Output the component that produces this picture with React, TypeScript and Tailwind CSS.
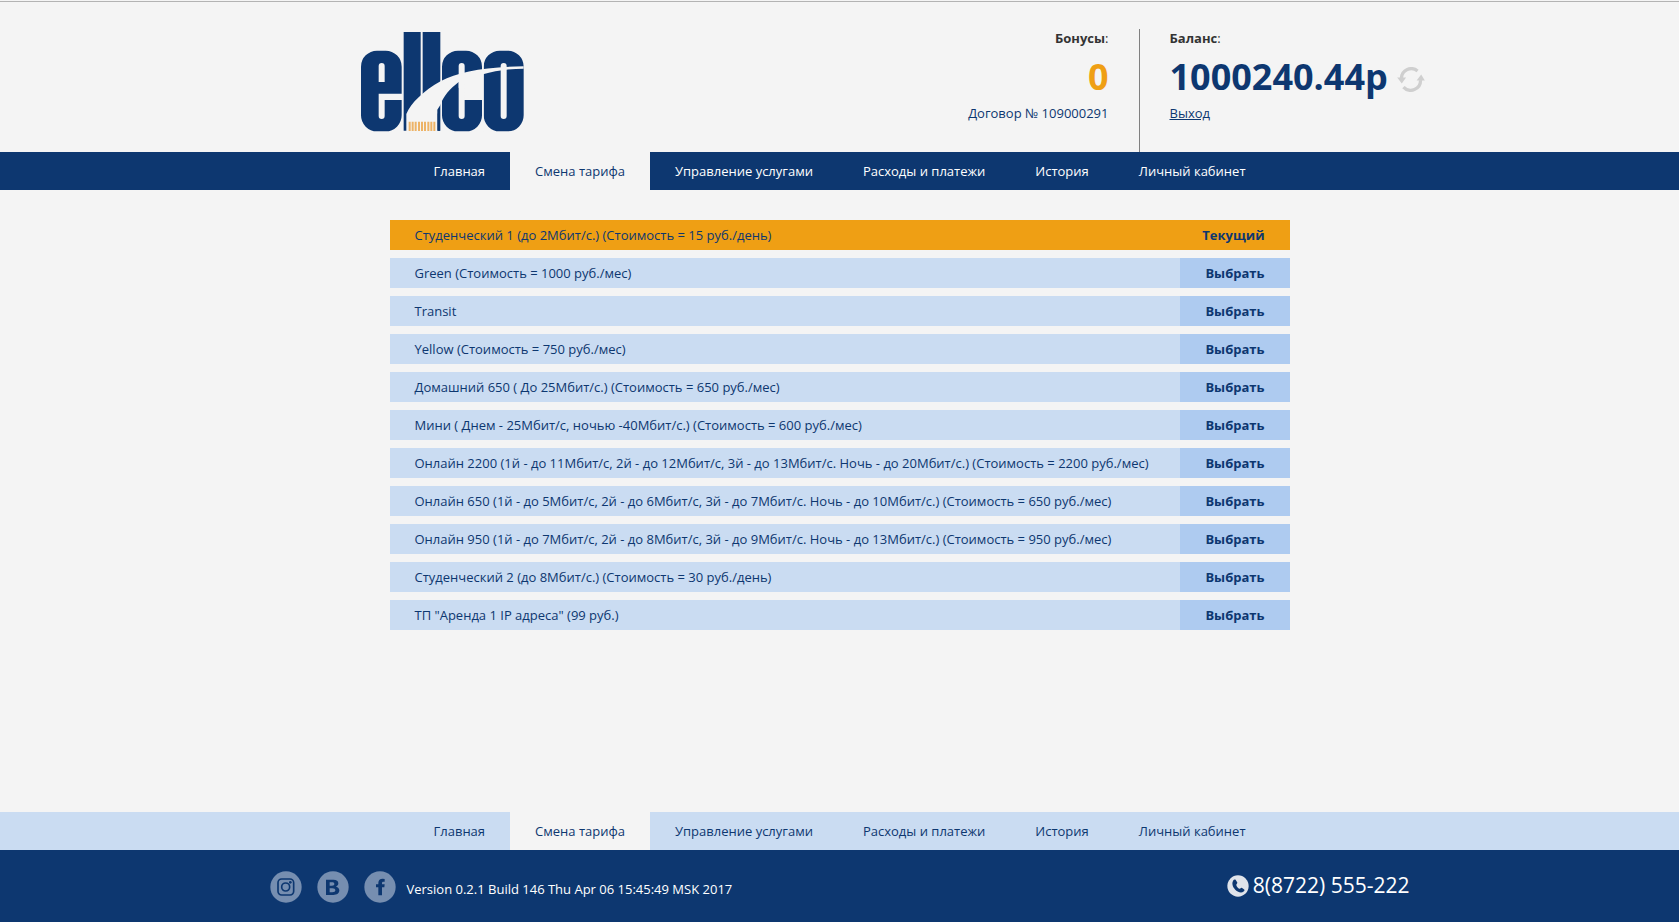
import React from 'react';

const menu: string[] = [
  'Главная',
  'Смена тарифа',
  'Управление услугами',
  'Расходы и платежи',
  'История',
  'Личный кабинет',
];

const activeItem = 'Смена тарифа';

const tariffs: string[] = [
  'Green (Стоимость = 1000 руб./мес)',
  'Transit',
  'Yellow (Стоимость = 750 руб./мес)',
  'Домашний 650 ( До 25Мбит/с.) (Стоимость = 650 руб./мес)',
  'Мини ( Днем - 25Мбит/с, ночью -40Мбит/с.) (Стоимость = 600 руб./мес)',
  'Онлайн 2200 (1й - до 11Мбит/с, 2й - до 12Мбит/с, 3й - до 13Мбит/с. Ночь - до 20Мбит/с.) (Стоимость = 2200 руб./мес)',
  'Онлайн 650 (1й - до 5Мбит/с, 2й - до 6Мбит/с, 3й - до 7Мбит/с. Ночь - до 10Мбит/с.) (Стоимость = 650 руб./мес)',
  'Онлайн 950 (1й - до 7Мбит/с, 2й - до 8Мбит/с, 3й - до 9Мбит/с. Ночь - до 13Мбит/с.) (Стоимость = 950 руб./мес)',
  'Студенческий 2 (до 8Мбит/с.) (Стоимость = 30 руб./день)',
  'ТП "Аренда 1 IP адреса" (99 руб.)',
];

function Logo() {
  return (
    <svg viewBox="34 36 489 300" className="h-[100px] w-[163px]" role="img" aria-label="ellco">
      <g fill="#0d3770">
        <path
          fillRule="evenodd"
          d="M34 140a48 48 0 0 1 48-48h26a48 48 0 0 1 48 48v81H87v67a9 9 0 0 0 18 0v-48h51v46a48 48 0 0 1-48 48H82a48 48 0 0 1-48-48zM87 186h18v-48a9 9 0 0 0-18 0z"
        />
        <path d="M162 36h51v296h-51zM219 36h53v296h-53z" />
        <path d="M277 140a48 48 0 0 1 48-48h24a48 48 0 0 1 48 48v46h-52v-48a9 9 0 0 0-18 0v150a9 9 0 0 0 18 0v-48h52v46a48 48 0 0 1-48 48h-24a48 48 0 0 1-48-48z" />
        <path
          fillRule="evenodd"
          d="M402 140a48 48 0 0 1 48-48h24a48 48 0 0 1 48 48v146a48 48 0 0 1-48 48h-24a48 48 0 0 1-48-48zM453 288a9 9 0 0 0 18 0v-150a9 9 0 0 0-18 0z"
        />
      </g>
      <path
        fill="#f4f4f4"
        d="M170 338v-56c14-33 50-69 104-99c50-27 130-43 248-44v7c-50 0-90 8-122 17v74h-55v-51l-18 18v-18c-27 21-46 43-55 69l-9 14v69z"
      />
      <path fill="#0d3770" d="M264 282c2-6 4-9 7-13v63h-7z" />
      <path fill="#f4f4f4" d="M397 92h5v242h-5z" />
      <path
        fill="#edb366"
        d="M177 305h6v28h-6zM186 305h6v28h-6zM195 305h6v28h-6zM205 305h6v28h-6zM214 305h6v28h-6zM223 305h6v28h-6zM233 305h6v28h-6zM242 305h6v28h-6zM251 305h6v28h-6z"
      />
    </svg>
  );
}

function RefreshIcon() {
  return (
    <svg viewBox="0 0 84 76" className="h-[25px] w-[28px]" aria-hidden="true">
      <g fill="none" stroke="#cfcfcf" strokeWidth="10">
        <path d="M13 34A30 30 0 0 1 62 12" />
        <path d="M71 40A30 30 0 0 1 19 61" />
      </g>
      <path fill="#cfcfcf" d="M0 32h27L14 50zM59 41h25L73 23z" />
    </svg>
  );
}

function InstagramIcon() {
  return (
    <svg viewBox="0 0 96 96" className="size-8" aria-hidden="true">
      <circle cx="48" cy="48" r="47" fill="#768eb0" />
      <g fill="none" stroke="#0d3770" strokeWidth="5">
        <rect x="24" y="24" width="47" height="48" rx="11" />
        <circle cx="47" cy="48" r="12" />
      </g>
      <circle cx="61" cy="34" r="4" fill="#0d3770" />
    </svg>
  );
}

function VkIcon() {
  return (
    <svg viewBox="0 0 96 96" className="size-8" aria-hidden="true">
      <circle cx="48" cy="48" r="47" fill="#768eb0" />
      <path
        fill="#0d3770"
        fillRule="evenodd"
        d="M27 26h22c10 0 15 4 15 11 0 5-3 8-7 10 6 1 10 6 10 11 0 9-7 14-18 14H27zM38 34v10h7c5 0 7-2 7-5s-2-5-7-5zM38 52v12h8c6 0 9-2 9-6s-3-6-9-6z"
      />
    </svg>
  );
}

function FacebookIcon() {
  return (
    <svg viewBox="0 0 96 96" className="size-8" aria-hidden="true">
      <circle cx="48" cy="48" r="47" fill="#768eb0" />
      <path
        fill="#0d3770"
        d="M43 73V49h-7v-9h7v-4c0-9 5-13 13-13l6 1v8h-4c-3 0-4 2-4 4v4h8l-1 9h-7v24z"
      />
    </svg>
  );
}

function PhoneIcon() {
  return (
    <svg viewBox="0 0 64 64" className="size-[22px]" aria-hidden="true">
      <circle cx="32" cy="32" r="31" fill="#dfe3ea" />
      <path
        fill="#0d3770"
        d="M18 16c2-3 5-4 7-2l5 8c1 2-3 5-3 7 1 5 5 9 9 11 3 0 5-4 7-3l7 5c2 2 0 5-2 6-4 4-10 4-17 0-10-6-17-17-15-27z"
      />
    </svg>
  );
}

function Menu({ tone, label }: { tone: 'dark' | 'light'; label: string }) {
  const dark = tone === 'dark';
  return (
    <nav aria-label={label} className={dark ? 'bg-[#0d3770]' : 'bg-[#cadcf2]'}>
      <ul className="flex justify-center">
        {menu.map((item) => {
          const active = item === activeItem;
          return (
            <li key={item}>
              <a
                href="#"
                aria-current={active ? 'page' : undefined}
                className={
                  'block px-[25px] py-[10px] leading-[18px] ' +
                  (active
                    ? 'bg-[#f4f4f4] text-[#0d3770]'
                    : dark
                      ? 'font-medium text-white'
                      : 'text-[#0d3770]')
                }
              >
                {item}
              </a>
            </li>
          );
        })}
      </ul>
    </nav>
  );
}

export default function App() {
  return (
    <div className="flex min-h-screen flex-col bg-[#f4f4f4] pt-px font-['Open_Sans',sans-serif] text-[13px] leading-[18px] text-[#0d3770]">
      <header className="border-t border-[#b3b3b3]">
        <div className="mx-auto flex h-[150px] max-w-[1200px] pt-[27px]">
          <div className="flex w-3/4 justify-between border-r border-[#808080] pr-[30px] pl-[121px]">
            <a href="#" className="mt-[3px]">
              <Logo />
            </a>
            <div className="text-right">
              <p className="text-[#333333]">
                <b>Бонусы</b>:
              </p>
              <p className="mt-[5px] mb-[3px] text-4xl leading-[49px] font-bold text-[#ef9f14]">0</p>
              <p>Договор № 109000291</p>
            </div>
          </div>
          <div className="pl-[30px]">
            <p className="text-[#333333]">
              <b>Баланс</b>:
            </p>
            <div className="mt-[5px] mb-[3px] flex items-center gap-[9px]">
              <p className="text-4xl leading-[49px] font-bold">1000240.44р</p>
              <button type="button" aria-label="Обновить баланс" className="pt-[6px]">
                <RefreshIcon />
              </button>
            </div>
            <a href="#" className="underline">
              Выход
            </a>
          </div>
        </div>
        <Menu tone="dark" label="Основное меню" />
      </header>

      <main className="mx-auto w-full max-w-[900px] grow py-[30px]">
        <ul className="flex flex-col gap-2">
          <li className="flex items-center justify-between bg-[#ef9f14] px-[25px] py-[6px]">
            <span>Студенческий 1 (до 2Мбит/с.) (Стоимость = 15 руб./день)</span>
            <b>Текущий</b>
          </li>
          {tariffs.map((tariff) => (
            <li key={tariff} className="flex justify-between bg-[#cadcf2]">
              <span className="py-[6px] pl-[25px]">{tariff}</span>
              <button type="button" className="bg-[#aecbf0] px-[25px] py-[6px] font-bold">
                Выбрать
              </button>
            </li>
          ))}
        </ul>
      </main>

      <footer>
        <Menu tone="light" label="Нижнее меню" />
        <div className="bg-[#0d3770] text-white">
          <div className="mx-auto flex h-[72px] max-w-[1200px] items-center justify-between px-[30px]">
            <div className="flex items-center gap-[15px] pt-px">
              <a href="#" aria-label="Instagram">
                <InstagramIcon />
              </a>
              <a href="#" aria-label="ВКонтакте">
                <VkIcon />
              </a>
              <a href="#" aria-label="Facebook">
                <FacebookIcon />
              </a>
              <p className="-ml-1 pt-1 font-medium">Version 0.2.1 Build 146 Thu Apr 06 15:45:49 MSK 2017</p>
            </div>
            <p className="flex items-center gap-1 text-[21px]">
              <PhoneIcon />
              <span className="pb-[2px]">8(8722) 555-222</span>
            </p>
          </div>
        </div>
      </footer>
    </div>
  );
}
